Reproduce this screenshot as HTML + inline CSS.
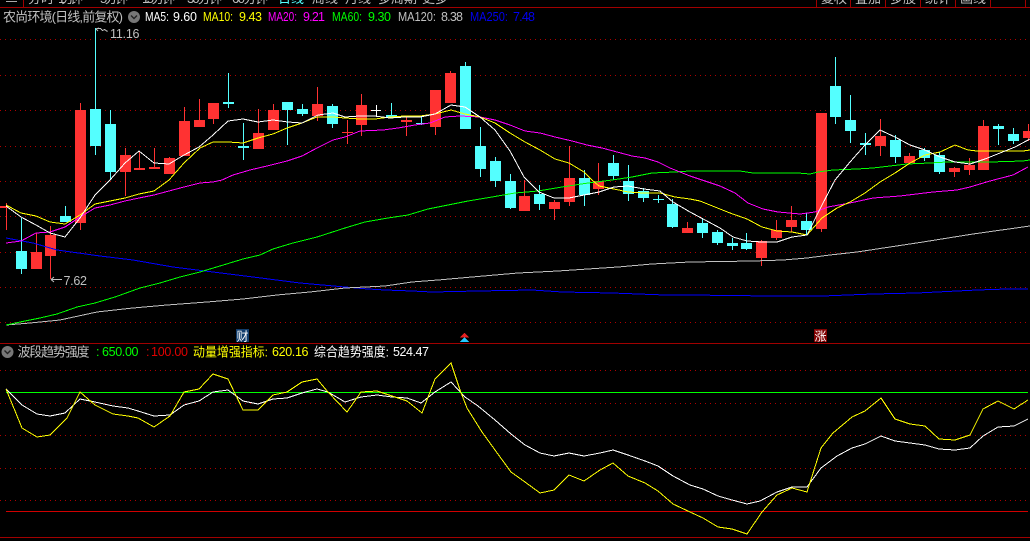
<!DOCTYPE html>
<html><head><meta charset="utf-8">
<style>
html,body{margin:0;padding:0;background:#000;width:1030px;height:541px;overflow:hidden}
svg{display:block}
text{font-family:"Liberation Sans","WenQuanYi Zen Hei","Noto Sans CJK SC",sans-serif;font-size:13px}
.n{font-size:12.5px}
.l{fill:none;stroke-width:1;shape-rendering:crispEdges}
.g{stroke:#b00000;stroke-width:1;stroke-dasharray:1 4;shape-rendering:crispEdges}
</style></head><body>
<svg width="1030" height="541" viewBox="0 0 1030 541" xmlns="http://www.w3.org/2000/svg">
<rect width="1030" height="541" fill="#000"/>
<!-- top tabs -->
<rect x="6" y="1" width="11" height="1" fill="#aaa"/>
<g fill="#c0c0c0">
<text x="28" y="3">分时</text><text x="58" y="3" textLength="25">1分钟</text><text x="100" y="3" textLength="28">5分钟</text><text x="142" y="3" textLength="33">15分钟</text><text x="187" y="3" textLength="35">30分钟</text><text x="232" y="3" textLength="36">60分钟</text>
<text x="278" y="3" fill="#54ffff">日线</text><text x="312" y="3">周线</text><text x="345" y="3">月线</text><text x="378" y="3">多周期</text><text x="422" y="3">更多</text>
<text x="821" y="3">复权</text><text x="855" y="3">叠加</text><text x="890" y="3">多股</text><text x="925" y="3">统计</text><text x="960" y="3">画线</text><text x="994" y="3" textLength="24">- - -</text>
</g>
<path d="M0 7.5H1030M23.5 0V7M816.5 0V7M850.5 0V7M885.5 0V7M920.5 0V7M955.5 0V7M990.5 0V7M1025.5 0V7" stroke="#a00000" fill="none" shape-rendering="crispEdges"/>
<!-- header -->
<text x="3" y="21.5" fill="#c0c0c0" textLength="120">农尚环境(日线,前复权)</text>
<circle cx="134" cy="17" r="6" fill="#777"/><path d="M131 15.5l3 3 3-3" stroke="#222" stroke-width="1.4" fill="none"/>
<text class="n" x="145" y="21" fill="#fff" textLength="24" lengthAdjust="spacingAndGlyphs">MA5:</text><text class="n" x="173" y="21" fill="#fff" textLength="24">9.60</text>
<text class="n" x="203" y="21" fill="#ff0" textLength="30" lengthAdjust="spacingAndGlyphs">MA10:</text><text class="n" x="239" y="21" fill="#ff0" textLength="23">9.43</text>
<text class="n" x="268" y="21" fill="#f0f" textLength="29" lengthAdjust="spacingAndGlyphs">MA20:</text><text class="n" x="303" y="21" fill="#f0f" textLength="22">9.21</text>
<text class="n" x="332" y="21" fill="#0f0" textLength="30" lengthAdjust="spacingAndGlyphs">MA60:</text><text class="n" x="368" y="21" fill="#0f0" textLength="23">9.30</text>
<text class="n" x="398" y="21" fill="#c0c0c0" textLength="38" lengthAdjust="spacingAndGlyphs">MA120:</text><text class="n" x="441" y="21" fill="#c0c0c0" textLength="22">8.38</text>
<text class="n" x="470" y="21" fill="#0000f0" textLength="38" lengthAdjust="spacingAndGlyphs">MA250:</text><text class="n" x="513" y="21" fill="#0000f0" textLength="22">7.48</text>
<!-- grid -->
<path class="g" d="M0 39.5H1030M0 75.5H1030M0 110.5H1030M0 146.5H1030M0 181.5H1030M0 216.5H1030M0 252.5H1030M0 287.5H1030M0 322.5H1030"/>
<path class="g" d="M0 370.5H1030M0 403.5H1030M0 435.5H1030M0 468.5H1030M0 500.5H1030"/>
<!-- candle wicks -->
<path stroke="#ff3232" fill="none" shape-rendering="crispEdges" d="M6.5 203V230M36.5 233V269M50.5 226V279M80.5 103V230M125.5 148V196M139.5 151V170M154.5 148V169M169.5 157V174M184.5 107V156M199.5 99V127M213.5 103V124M258.5 109V149M273.5 104V130M317.5 87V121M347.5 120V144M361.5 94V136M406.5 117V136M435.5 90V135M450.5 71V103M524.5 180V211M554.5 200V220M569.5 146V206M598.5 163V195M687.5 222V233M761.5 240V266M776.5 220V240M791.5 206V232M821.5 113V232M880.5 119V156M909.5 153V163M954.5 167V177M969.5 158V175M983.5 120V170M1028.5 124V141"/>
<path stroke="#54ffff" fill="none" shape-rendering="crispEdges" d="M21.5 218V274M65.5 206V222M95.5 28V155M110.5 110V180M228.5 73V108M243.5 123V160M287.5 102V145M302.5 104V116M332.5 104V128M391.5 103V118M421.5 117V125M465.5 62V129M480.5 127V177M495.5 157V187M510.5 174V209M539.5 185V210M584.5 170V206M613.5 155V180M628.5 165V201M643.5 188V202M658.5 195V203M672.5 199V228M702.5 218V238M717.5 230V245M732.5 238V250M746.5 233V250M806.5 213V235M835.5 57V124M850.5 95V143M865.5 133V155M895.5 135V163M924.5 148V161M939.5 152V174M998.5 124V145M1013.5 128V144"/>
<!-- candle bodies -->
<path fill="#ff3232" shape-rendering="crispEdges" d="M0 206h8v2h-8zM31 252h11v17h-11zM45 235h11v21h-11zM75 110h11v113h-11zM120 155h11v17h-11zM134 168h11v2h-11zM149 167h11v2h-11zM164 158h11v16h-11zM179 121h11v35h-11zM194 120h11v7h-11zM208 103h11v16h-11zM253 133h11v16h-11zM268 110h11v20h-11zM312 104h11v12h-11zM342 132h11v1h-11zM356 105h11v20h-11zM401 120h11v2h-11zM430 90h11v37h-11zM445 73h11v30h-11zM519 196h11v15h-11zM549 202h11v7h-11zM564 178h11v24h-11zM593 181h11v8h-11zM682 228h11v5h-11zM756 241h11v17h-11zM771 230h11v8h-11zM786 220h11v7h-11zM816 113h11v116h-11zM875 136h11v10h-11zM904 156h11v7h-11zM949 168h11v4h-11zM964 165h11v5h-11zM978 126h11v44h-11zM1023 131h7v7h-7z"/>
<path fill="#54ffff" shape-rendering="crispEdges" d="M16 251h11v18h-11zM60 216h11v6h-11zM90 109h11v37h-11zM105 124h11v48h-11zM223 102h11v2h-11zM238 146h11v2h-11zM282 102h11v8h-11zM297 109h11v5h-11zM327 106h11v18h-11zM386 115h11v3h-11zM416 123h11v1h-11zM460 66h11v63h-11zM475 146h11v23h-11zM490 161h11v20h-11zM505 181h11v27h-11zM534 194h11v10h-11zM579 178h11v17h-11zM608 163h11v13h-11zM623 181h11v13h-11zM638 191h11v7h-11zM653 199h11v1h-11zM667 204h11v23h-11zM697 223h11v10h-11zM712 232h11v11h-11zM727 243h11v3h-11zM741 243h11v6h-11zM801 221h11v9h-11zM830 86h11v31h-11zM845 120h11v11h-11zM860 143h11v2h-11zM890 140h11v17h-11zM919 150h11v8h-11zM934 155h11v17h-11zM993 126h11v3h-11zM1008 134h11v7h-11z"/>
<path stroke="#fff" fill="none" shape-rendering="crispEdges" d="M371 110.5H381M376.5 105V117"/>
<!-- MA lines -->
<polyline class="l" stroke="#0000ff" points="6,238 33,243 57,250 100,256 133,260 173,267 213,272 253,277 300,283 345,287 368,289 385,290 412,291 432,292 478,291 532,290 562,292 612,293 665,295 690,295 770,296 823,296 873,294 917,293 977,290 1007,289 1028,289"/>
<polyline class="l" stroke="#c0c0c0" points="6,325 30,323 60,320 97,312 133,308 167,305 207,302 243,299 277,295 310,292 345,288 385,286 412,282 438,280 472,277 518,273 558,271 588,269 618,267 652,264 690,262 753,261 783,260 807,258 830,255 857,252 890,247 923,242 973,234 1030,226"/>
<polyline class="l" stroke="#00ff00" points="6,325 20,322 40,318 57,314 77,307 95,303 115,297 140,288 160,283 180,277 200,272 220,266 243,259 260,255 273,249 293,243 317,237 345,228 365,222 388,218 408,215 428,209 448,205 468,201 492,197 515,193 538,191 562,187 588,183 612,180 632,177 652,173 675,172 690,171 740,171 753,173 798,173 810,174 818,172 833,170 857,169 873,168 890,166 907,164 930,163 947,162 990,162 1023,161 1030,160"/>
<polyline class="l" stroke="#ff00ff" points="6,243 21,241 36,233 50,232 65,227 80,217 95,208 110,205 125,201 139,198 154,195 169,191 184,187 200,183 213,182 222,180 233,175 250,170 267,166 287,161 302,156 317,148 333,140 345,137 360,131 383,130 398,128 415,125 430,123 445,117 460,116 480,117 495,120 510,125 525,131 540,133 555,137 572,141 587,145 602,148 617,152 632,156 645,158 658,162 670,168 690,176 705,181 720,186 735,193 748,203 763,209 778,212 800,214 815,212 828,207 850,203 873,198 900,196 933,192 957,190 970,187 990,181 1013,175 1028,167"/>
<polyline class="l" stroke="#ffff00" points="6,205 21,213 36,216 50,222 65,224 80,215 95,204 110,201 125,198 139,194 154,191 169,180 184,163 200,148 213,142 228,142 243,143 258,138 273,134 287,128 302,123 317,117 333,117 345,118 360,119 375,119 390,117 405,116 420,116 435,114 451,110 465,114 480,117 495,123 510,133 525,142 540,150 555,159 569,163 584,172 592,180 599,186 614,189 628,192 644,193 660,193 675,197 690,199 700,201 715,207 730,213 747,219 762,227 777,231 792,232 807,235 822,218 837,208 850,202 865,193 880,182 895,173 910,163 925,155 940,152 955,145 968,150 977,151 1000,151 1023,151 1030,150"/>
<polyline class="l" stroke="#ffffff" points="6,206 21,217 36,225 50,233 65,237 80,218 95,195 110,180 125,163 139,151 154,163 169,164 184,155 199,147 213,135 228,121 243,119 258,122 273,120 288,122 302,123 318,115 333,113 345,117 360,116 375,116 390,118 405,117 420,117 435,114 451,105 465,107 480,117 495,130 510,151 524,177 539,192 554,198 569,198 584,195 599,192 614,187 628,186 644,189 660,191 673,202 690,212 705,220 720,228 733,237 747,241 762,242 777,242 792,237 807,235 822,205 835,180 850,162 865,145 880,130 895,137 910,145 925,150 940,157 955,162 970,164 985,159 1000,153 1015,147 1030,139"/>
<!-- price annotations -->
<path d="M96.5 28.5h4l2 2 2-1 3 2" stroke="#c0c0c0" fill="none" shape-rendering="crispEdges"/>
<path d="M96 29l3-1M98 31l-2-2" stroke="#c0c0c0" fill="none"/>
<text class="n" x="110" y="38" fill="#c0c0c0" textLength="29.5">11.16</text>
<path d="M51 279.5H62M51 279.5l3-2.5M51 279.5l3 2.5" stroke="#c0c0c0" fill="none"/>
<text class="n" x="63.5" y="285" fill="#c0c0c0" textLength="23.5">7.62</text>
<!-- markers -->
<rect x="236" y="329" width="13" height="13" fill="#103c6c"/>
<text x="236.5" y="340.5" fill="#fff" style="font-size:12px">财</text>
<rect x="814" y="329" width="13" height="13" fill="#800000"/>
<text x="814.5" y="340.5" fill="#fff" style="font-size:12px">涨</text>
<path d="M464.5 332.5L469 337.5H460Z" fill="#e02020" shape-rendering="crispEdges"/>
<path d="M464.5 337L469 342H460Z" fill="#20c8ff" shape-rendering="crispEdges"/>
<!-- separators -->
<path d="M0 343.5H1030M0 537.5H1030" stroke="#a00000" shape-rendering="crispEdges"/>
<!-- lower header -->
<circle cx="7.5" cy="352" r="6" fill="#777"/><path d="M4.5 350.5l3 3 3-3" stroke="#222" stroke-width="1.4" fill="none"/>
<text x="17.5" y="356.5" fill="#c0c0c0" textLength="72">波段趋势强度</text>
<text class="n" x="96" y="356" fill="#0f0">:</text><text class="n" x="102" y="356" fill="#0f0" textLength="36.5">650.00</text>
<text class="n" x="146" y="356" fill="#e00000">:</text><text class="n" x="151" y="356" fill="#e00000" textLength="37">100.00</text>
<text x="193" y="356.5" fill="#ff0" textLength="75" lengthAdjust="spacingAndGlyphs">动量增强指标:</text><text class="n" x="272" y="356" fill="#ff0" textLength="36.5">620.16</text>
<text x="314" y="356.5" fill="#fff" textLength="75" lengthAdjust="spacingAndGlyphs">综合趋势强度:</text><text class="n" x="393" y="356" fill="#fff" textLength="36">524.47</text>
<!-- lower lines -->
<path d="M6 392.5H1028" stroke="#00ff00" shape-rendering="crispEdges"/>
<path d="M6 511.5H1028" stroke="#d00000" shape-rendering="crispEdges"/>
<polyline class="l" stroke="#ffffff" points="6,389 22,405 37,414 50,416 65,413 80,399 95,402 113,406 128,408 138,411 154,416 170,415 184,405 199,401 213,392 228,390 243,401 258,404 273,399 287,398 302,393 317,389 328,392 345,402 361,397 377,395 392,397 407,398 421,403 435,392 451,382 465,397 478,406 495,420 511,434 525,445 540,453 554,456 569,453 584,456 600,453 613,450 628,455 645,461 658,466 673,476 690,485 703,489 718,496 732,500 747,504 760,501 777,492 792,487 807,487 821,468 837,456 852,448 865,444 881,436 895,441 910,443 925,445 939,449 955,450 970,448 983,436 998,427 1014,426 1028,419"/>
<polyline class="l" stroke="#ffff00" points="6,389 22,428 37,437 50,435 67,418 80,392 95,405 113,414 128,416 138,418 154,427 170,416 184,392 199,389 213,374 228,379 243,410 258,410 273,395 287,392 302,382 317,379 328,392 347,412 361,392 377,391 392,396 407,401 422,413 435,379 451,363 460,390 467,408 482,432 495,450 511,472 525,482 540,493 554,490 569,475 584,481 600,470 613,463 628,476 645,483 658,491 673,504 690,512 703,518 718,527 732,529 747,534 762,512 777,495 792,488 807,492 821,448 833,433 852,417 865,411 881,398 895,419 910,424 925,426 939,439 955,440 970,435 983,409 998,401 1014,409 1028,400"/>
</svg>
</body></html>
